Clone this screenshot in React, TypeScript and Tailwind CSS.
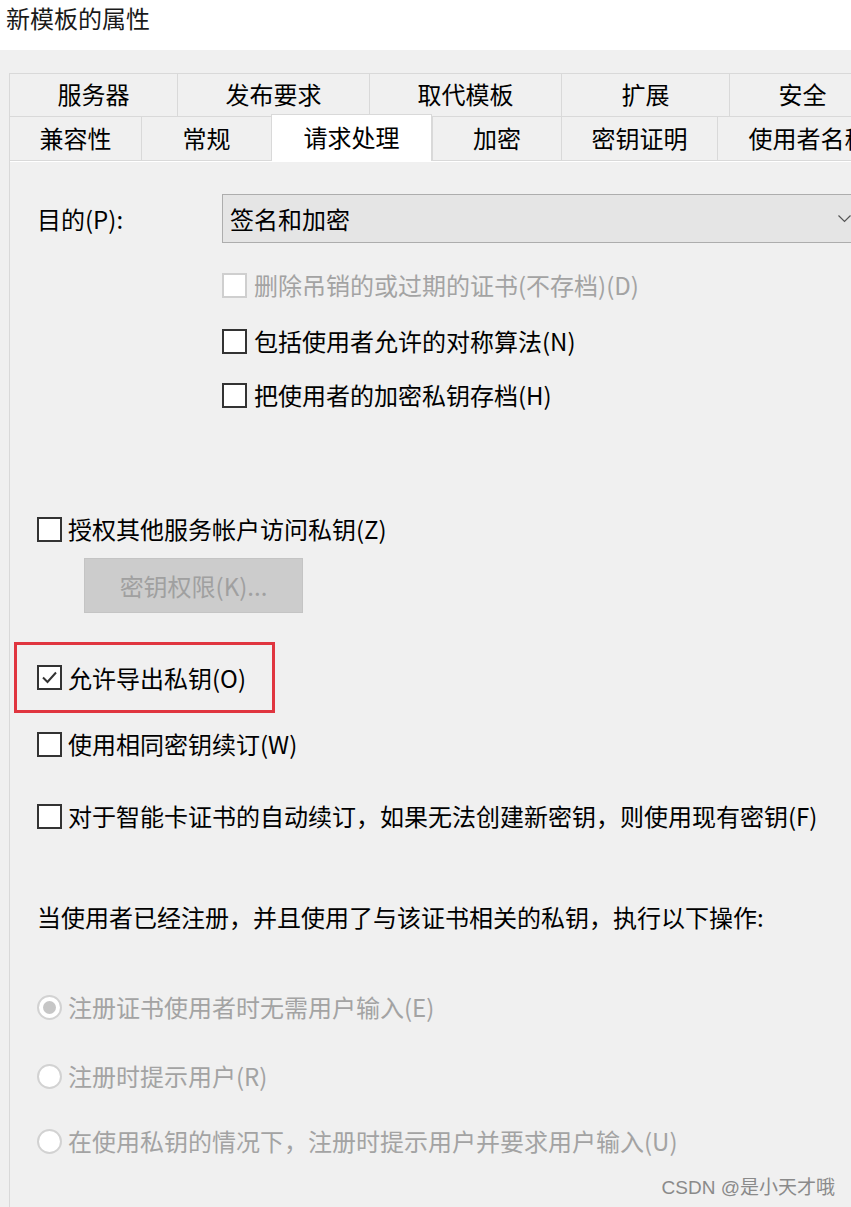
const font = "font-['Noto_Sans_CJK_SC','Liberation_Sans',sans-serif]";

interface TabProps {
    label: string,
    width: string,
    selected?: boolean,
}

const Tab = ({ label, width, selected }: TabProps) => {
    if (selected) {
        return (
            <div className={`relative z-10 flex shrink-0 ${width} h-[47px] -mb-px pb-[2px] items-center justify-center border-l border-r border-t border-[#d9d9d9] bg-white text-[24px] leading-[32px] text-black`}>
                {label}
            </div>
        )
    }
    return (
        <div className={`flex shrink-0 ${width} h-full pb-[2px] items-center justify-center border-l border-t border-[#d9d9d9] bg-[#f0f0f0] text-[24px] leading-[32px] text-black`}>
            {label}
        </div>
    )
}

const CheckBox = ({ checked, disabled }: { checked?: boolean, disabled?: boolean }) => {
    return (
        <div className={`flex shrink-0 w-[25px] h-[25px] items-center justify-center border-2 bg-white ${disabled ? "border-[#cfcfcf]" : "border-[#333333]"}`}>
            {checked && (
                <svg width="19" height="19" viewBox="0 0 19 19" fill="none">
                    <polyline points="3,9.5 7.5,14 16,4.5" stroke="#333333" strokeWidth="2" />
                </svg>
            )}
        </div>
    )
}

const Radio = ({ dot }: { dot?: boolean }) => {
    return (
        <div className="flex shrink-0 w-[25px] h-[25px] items-center justify-center rounded-full border-2 border-[#d2d2d2] bg-white">
            {dot && <div className="w-[13px] h-[13px] rounded-full bg-[#c6c6c6]" />}
        </div>
    )
}

export default function App() {
    return (
        <div className={`relative flex flex-col w-[851px] h-[1207px] overflow-hidden bg-[#f0f0f0] ${font}`}>
            {/* title */}
            <div className="flex h-[50px] shrink-0 bg-white pl-[6px] pt-[2px]">
                <span className="text-[24px] leading-[32px] text-[#1a1a1a]">新模板的属性</span>
            </div>

            {/* tabs */}
            <div className="flex flex-col pl-[9px] pt-[23px]">
                <div className="flex flex-row h-[43px]">
                    <Tab label="服务器" width="w-[168px]" />
                    <Tab label="发布要求" width="w-[192px]" />
                    <Tab label="取代模板" width="w-[192px]" />
                    <Tab label="扩展" width="w-[168px]" />
                    <Tab label="安全" width="w-[146px]" />
                </div>
                <div className="flex flex-row h-[44px] items-end">
                    <Tab label="兼容性" width="w-[132px]" />
                    <Tab label="常规" width="w-[130px]" />
                    <Tab label="请求处理" width="w-[161px]" selected />
                    <Tab label="加密" width="w-[129px]" />
                    <Tab label="密钥证明" width="w-[156px]" />
                    <Tab label="使用者名称" width="w-[182px]" />
                </div>
            </div>

            {/* panel */}
            <div className="flex flex-col flex-1 ml-[9px] border-l border-t border-[#d9d9d9] shadow-[inset_0_1px_0_#ffffff] pl-[27px] pt-[33px] text-[24px] leading-[32px] text-black">
                {/* purpose */}
                <div className="flex flex-row items-center h-[49px]">
                    <span className="w-[185px] shrink-0">目的(P):</span>
                    <div className="flex flex-1 -mr-[12px] h-full flex-row items-center justify-between border border-[#adadad] bg-[#e5e5e5] pl-[7px] pr-[11px]">
                        <span>签名和加密</span>
                        <svg width="13" height="8" viewBox="0 0 13 8" fill="none">
                            <polyline points="0.5,0.5 6.5,6.5 12.5,0.5" stroke="#555555" strokeWidth="1.2" />
                        </svg>
                    </div>
                </div>

                <div className="flex flex-col pl-[185px]">
                    <div className="flex flex-row items-center gap-[7px] h-[32px] mt-[26px] text-[#a3a3a3]">
                        <CheckBox disabled />
                        <span>删除吊销的或过期的证书(不存档)(D)</span>
                    </div>
                    <div className="flex flex-row items-center gap-[7px] h-[32px] mt-[24px]">
                        <CheckBox />
                        <span>包括使用者允许的对称算法(N)</span>
                    </div>
                    <div className="flex flex-row items-center gap-[7px] h-[32px] mt-[22px]">
                        <CheckBox />
                        <span>把使用者的加密私钥存档(H)</span>
                    </div>
                </div>

                <div className="flex flex-row items-center gap-[6px] h-[32px] mt-[102px]">
                    <CheckBox />
                    <span>授权其他服务帐户访问私钥(Z)</span>
                </div>
                <div className="flex w-[219px] h-[55px] ml-[47px] mt-[13px] items-center justify-center border border-[#c4c4c4] bg-[#cccccc] text-[#a0a0a0]">
                    密钥权限(K)...
                </div>

                {/* highlighted option */}
                <div className="flex flex-row items-center gap-[6px] w-[261px] h-[71px] -ml-[23px] mt-[29px] pl-[20px] border-[3px] border-[#e0353f]">
                    <CheckBox checked />
                    <span>允许导出私钥(O)</span>
                </div>

                <div className="flex flex-row items-center gap-[6px] h-[32px] mt-[15px]">
                    <CheckBox />
                    <span>使用相同密钥续订(W)</span>
                </div>
                <div className="flex flex-row items-center gap-[6px] h-[32px] mt-[40px]">
                    <CheckBox />
                    <span>对于智能卡证书的自动续订，如果无法创建新密钥，则使用现有密钥(F)</span>
                </div>

                <span className="h-[32px] mt-[69px]">当使用者已经注册，并且使用了与该证书相关的私钥，执行以下操作:</span>

                <div className="flex flex-col text-[#a3a3a3]">
                    <div className="flex flex-row items-center gap-[6px] h-[32px] mt-[58px]">
                        <Radio dot />
                        <span>注册证书使用者时无需用户输入(E)</span>
                    </div>
                    <div className="flex flex-row items-center gap-[6px] h-[32px] mt-[37px]">
                        <Radio />
                        <span>注册时提示用户(R)</span>
                    </div>
                    <div className="flex flex-row items-center gap-[6px] h-[32px] mt-[33px]">
                        <Radio />
                        <span>在使用私钥的情况下，注册时提示用户并要求用户输入(U)</span>
                    </div>
                </div>
            </div>

            {/* watermark */}
            <span className="absolute right-[16px] bottom-[6px] text-[19px] leading-[26px] text-[#8a8a8a] font-['Liberation_Sans','Noto_Sans_CJK_SC',sans-serif]">
                CSDN @是小天才哦
            </span>
        </div>
    )
}
